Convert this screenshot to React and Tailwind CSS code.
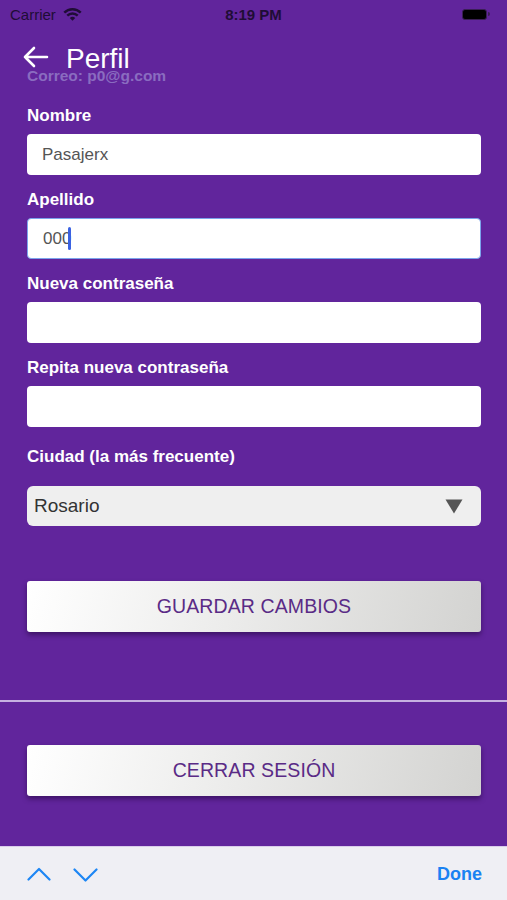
import { useState } from 'react'

function StatusBar() {
  return (
    <div className="relative flex items-center h-[28px] px-[10px] text-[#1f0d36] text-[15px]">
      <span className="leading-none">Carrier</span>
      <svg width="19" height="14" viewBox="0 0 18 13" className="ml-[7px] -mt-[1px]">
        <path d="M1.2 5.2 A11 11 0 0 1 16.8 5.2" fill="none" stroke="#1f0d36" strokeWidth="2.3" />
        <path d="M4.05 8.05 A7 7 0 0 1 13.95 8.05" fill="none" stroke="#1f0d36" strokeWidth="2.3" />
        <path d="M9 13 L6.4 10.4 A3.7 3.7 0 0 1 11.6 10.4 Z" fill="#1f0d36" />
      </svg>
      <span className="absolute left-0 right-0 text-center font-bold leading-none pointer-events-none">8:19 PM</span>
      <div className="ml-auto flex items-center mr-[7px]">
        <div className="w-[25px] h-[11px] rounded-[3px] bg-black border border-[#3a1f55]" />
        <div className="w-[2px] h-[4px] rounded-r-sm bg-[#3a1f55] ml-[1px]" />
      </div>
    </div>
  )
}

function Field({ label, value, focused }) {
  return (
    <div className="flex flex-col">
      <label className="text-[17px] leading-[20px] font-bold text-white">{label}</label>
      <div
        className={`mt-[8px] h-[41px] rounded-[4px] bg-white flex items-center pl-[15px] text-[17px] text-[#555] ${
          focused ? 'border border-[#7ba4ec] pl-[14px]' : ''
        }`}
      >
        <span>{value}</span>
        {focused && <span className="w-[3px] h-[23px] bg-[#3a62e2] -ml-[3px] rounded-sm" />}
      </div>
    </div>
  )
}

function SilverButton({ children }) {
  return (
    <button className="w-full h-[51px] rounded-[3px] bg-[linear-gradient(105deg,#ffffff_0%,#ececeb_45%,#d3d3d1_100%)] shadow-[0_3px_5px_rgba(35,5,60,0.55)] text-[#5a2b86] text-[19.5px] tracking-[0.1px]">
      {children}
    </button>
  )
}

export default function App() {
  const [city] = useState('Rosario')

  return (
    <div className="w-[507px] h-[900px] bg-[#61259c] flex flex-col overflow-hidden font-['Liberation_Sans',Arial,sans-serif]">
      <StatusBar />

      <div className="relative z-10 flex items-start h-[32px] mt-[15px] pl-[22px]">
        <svg width="27" height="22" viewBox="0 0 27 22" className="mt-[3px]">
          <path d="M25 11 H3 M12 2 L3 11 L12 20" fill="none" stroke="white" strokeWidth="2.6" strokeLinecap="round" strokeLinejoin="round" />
        </svg>
        <span className="ml-[17px] text-[28px] leading-[32px] text-white">Perfil</span>
      </div>
      <div className="-mt-[8px] pl-[27px] text-[15.5px] leading-[18px] font-bold text-[#8a6cc0]">Correo: p0@g.com</div>

      <div className="flex flex-col pl-[27px] pr-[26px] mt-[21px]">
        <Field label="Nombre" value="Pasajerx" />
        <div className="mt-[15px]">
          <Field label="Apellido" value="000" focused />
        </div>
        <div className="mt-[15px]">
          <Field label="Nueva contraseña" value="" />
        </div>
        <div className="mt-[15px]">
          <Field label="Repita nueva contraseña" value="" />
        </div>

        <label className="mt-[20px] text-[17px] leading-[20px] font-bold text-white">Ciudad (la más frecuente)</label>
        <div className="mt-[19px] h-[40px] rounded-[6px] bg-[#efefef] flex items-center pl-[7px] pr-[18px] text-[19px] text-[#333]">
          <span>{city}</span>
          <svg width="18" height="15" viewBox="0 0 18 15" className="ml-auto">
            <path d="M0.5 0.5 H17.5 L9 14.5 Z" fill="#555" />
          </svg>
        </div>

        <div className="mt-[55px]">
          <SilverButton>GUARDAR CAMBIOS</SilverButton>
        </div>
      </div>

      <div className="mt-[68px] h-[2px] bg-[#c6b1e1]" />

      <div className="pl-[27px] pr-[26px] mt-[43px]">
        <SilverButton>CERRAR SESIÓN</SilverButton>
      </div>

      <div className="mt-auto h-[54px] bg-[#efeff4] border-t border-[#d9cdea] flex items-center pl-[27px] pr-[25px]">
        <svg width="24" height="14" viewBox="0 0 24 14">
          <path d="M1.5 12.5 L12 2 L22.5 12.5" fill="none" stroke="#1d86f4" strokeWidth="2.2" strokeLinecap="round" strokeLinejoin="round" />
        </svg>
        <svg width="25" height="14" viewBox="0 0 25 14" className="ml-[22px] mt-[2px]">
          <path d="M1.5 1.5 L12.5 12.5 L23.5 1.5" fill="none" stroke="#1d86f4" strokeWidth="2.2" strokeLinecap="round" strokeLinejoin="round" />
        </svg>
        <span className="ml-auto text-[18px] font-bold text-[#1a82f2] mt-[1px]">Done</span>
      </div>
    </div>
  )
}
